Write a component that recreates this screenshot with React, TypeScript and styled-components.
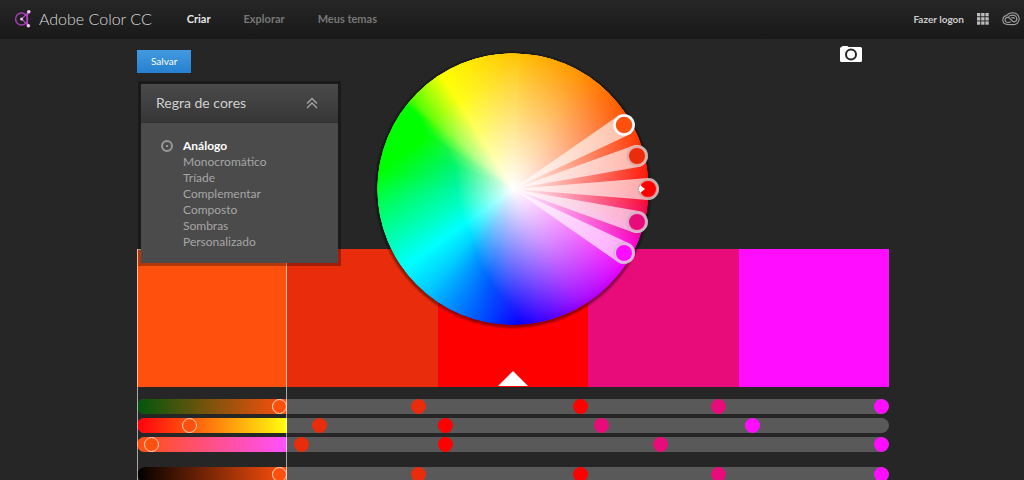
import React, { useState } from "react";
import styled, { createGlobalStyle } from "styled-components";

const GlobalStyle = createGlobalStyle`
  * { box-sizing: border-box; }
  body {
    margin: 0;
    background: #262626;
    font-family: Lato, "Open Sans", sans-serif;
    font-size: 12px;
    color: #a8a8a8;
  }
  button { font-family: inherit; border: 0; padding: 0; cursor: pointer; }
`;

const Page = styled.div`
  height: 100vh;
  overflow: hidden;
`;

const Header = styled.header`
  display: flex;
  align-items: center;
  height: 39px;
  padding: 0 4px 2px 14px;
  background: linear-gradient(#262626, #191919);
`;

const Brand = styled.a`
  display: flex;
  align-items: center;
  gap: 6px;
  color: #dcdcdc;
  font-size: 16px;
  font-weight: 300;
  line-height: 20px;
  text-decoration: none;
  white-space: nowrap;
`;

const Nav = styled.nav`
  display: flex;
  gap: 33px;
  margin-left: 35px;
`;

const NavLink = styled.a<{ $active?: boolean }>`
  color: ${(p) => (p.$active ? "#e6e6e6" : "#777777")};
  font-size: 11px;
  font-weight: 700;
  line-height: 16px;
  text-decoration: none;
`;

const Account = styled.div`
  display: flex;
  align-items: center;
  gap: 13px;
  margin-left: auto;
`;

const Login = styled.a`
  color: #cccccc;
  font-size: 10px;
  font-weight: 700;
  line-height: 14px;
  text-decoration: none;
`;

const IconButton = styled.button`
  display: flex;
  background: none;
`;

const Main = styled.main`
  padding: 0 135px 0 137px;
`;

const Stage = styled.section`
  position: relative;
  z-index: 1;
  display: grid;
  grid-template-columns: 1fr 300px 1fr;
  align-items: start;
`;

const LeftColumn = styled.div`
  padding-top: 11px;
`;

const RightColumn = styled.div`
  display: flex;
  justify-content: flex-end;
  padding: 7px 27px 0 0;
`;

const SaveButton = styled.button`
  display: block;
  height: 23px;
  padding: 0 14px;
  background: linear-gradient(#429ae0, #2580d0);
  color: #ffffff;
  font-size: 10px;
  line-height: 23px;
`;

const Panel = styled.section`
  width: 203px;
  margin: 8px 0 0 1px;
  border: 3px solid rgba(0, 0, 0, 0.3);
  background: #4b4b4b;
  background-clip: padding-box;
`;

const PanelHeader = styled.header`
  display: flex;
  align-items: center;
  justify-content: space-between;
  height: 39px;
  padding: 0 20px 0 15px;
  border-bottom: 1px solid #323232;
  background: linear-gradient(#4a4a4a, #363636);
`;

const PanelTitle = styled.h2`
  margin: 0;
  color: #cfcfcf;
  font-size: 14px;
  font-weight: 400;
  line-height: 20px;
`;

const RuleList = styled.fieldset`
  display: flex;
  flex-direction: column;
  margin: 0;
  padding: 15px 20px 13px;
  border: 0;
`;

const RuleItem = styled.label<{ $active: boolean }>`
  display: flex;
  align-items: center;
  gap: 10px;
  color: ${(p) => (p.$active ? "#ffffff" : "#a6a6a6")};
  font-size: 12px;
  font-weight: ${(p) => (p.$active ? 700 : 400)};
  line-height: 16px;
`;

const RuleRadio = styled.input`
  appearance: none;
  display: grid;
  place-items: center;
  width: 12px;
  height: 12px;
  margin: 0;
  border-radius: 50%;
  &:checked {
    border: 2px solid #989898;
  }
  &:checked::after {
    content: "";
    width: 2px;
    height: 2px;
    background: #989898;
  }
`;

const WheelSvg = styled.svg`
  display: block;
  overflow: visible;
`;

const Editor = styled.section`
  position: relative;
  margin-top: -90px;
`;

const Swatches = styled.div`
  display: grid;
  grid-template-columns: repeat(5, 1fr);
`;

const Swatch = styled.button<{ $color: string }>`
  display: flex;
  align-items: flex-end;
  justify-content: center;
  height: 138px;
  padding-bottom: 1px;
  background: ${(p) => p.$color};
`;

const Selection = styled.div`
  position: absolute;
  top: 0;
  bottom: 0;
  left: 0;
  width: 20%;
  border: 1px solid rgba(255, 255, 255, 0.6);
  pointer-events: none;
`;

const Sliders = styled.div`
  display: flex;
  flex-direction: column;
  gap: 15px;
  padding: 12px 0 40px;
`;

const SliderGroup = styled.div`
  display: flex;
  flex-direction: column;
  gap: 4px;
`;

const SliderRow = styled.div`
  display: grid;
  grid-template-columns: repeat(5, 1fr);
  height: 15px;
  border-radius: 8px;
  overflow: hidden;
  background: #595959;
`;

const Slider = styled.input<{ $color: string; $track?: string }>`
  appearance: none;
  width: 100%;
  height: 15px;
  margin: 0;
  background: ${(p) => p.$track || "transparent"};
  &::-webkit-slider-thumb {
    appearance: none;
    width: 15px;
    height: 15px;
    border: ${(p) => (p.$track ? "1px solid #ffd9c8" : "0")};
    border-radius: 50%;
    background: ${(p) => p.$color};
  }
`;

const COLORS = ["#ff500d", "#e82c0c", "#ff0000", "#e80c7a", "#ff0dff"];
const RULES = ["Análogo", "Monocromático", "Tríade", "Complementar", "Composto", "Sombras", "Personalizado"];

type Row = { name: string; track: string; values: number[] };
const GROUPS: Row[][] = [
  [
    { name: "R", track: "linear-gradient(90deg, #00560d, #ff500d)", values: [100, 91, 100, 91, 100] },
    { name: "G", track: "linear-gradient(90deg, #ff000d, #ff500d 33%, #ffff0d)", values: [33, 18, 0, 4, 5] },
    { name: "B", track: "linear-gradient(90deg, #ff500d, #ff50ff)", values: [5, 5, 0, 48, 100] },
  ],
  [{ name: "Brilho", track: "linear-gradient(90deg, #000000, #ff500d)", values: [100, 91, 100, 91, 100] }],
];

// Clockwise from the top: angle, rim colour, inner colour, radius share where the
// white fade ends, radius share where the rim colour is reached.
type Stop = [number, number[], number[], number, number];
const STOPS: Stop[] = [
  [0, [255, 196, 0], [255, 212, 60], 0.78, 1],
  [30, [255, 146, 0], [255, 160, 40], 0.84, 1],
  [60, [255, 72, 0], [255, 80, 10], 0.96, 1],
  [90, [255, 0, 0], [255, 20, 20], 0.97, 1],
  [105, [240, 0, 128], [240, 10, 128], 0.97, 1],
  [119, [255, 0, 255], [255, 20, 255], 0.94, 1],
  [150, [150, 0, 255], [160, 20, 255], 0.94, 1],
  [178, [0, 0, 255], [30, 20, 255], 0.9, 1],
  [194, [0, 80, 255], [0, 90, 255], 0.7, 1],
  [210, [0, 150, 255], [0, 165, 255], 0.54, 1],
  [220, [0, 200, 255], [0, 215, 255], 0.47, 1],
  [234, [0, 255, 255], [0, 255, 255], 0.43, 1],
  [252, [0, 255, 150], [0, 255, 200], 0.41, 1],
  [268, [0, 255, 60], [0, 248, 172], 0.41, 1],
  [277, [0, 255, 0], [0, 245, 150], 0.42, 0.98],
  [292, [0, 255, 0], [0, 245, 110], 0.46, 0.8],
  [302, [0, 255, 0], [30, 245, 70], 0.56, 0.74],
  [308, [0, 255, 0], [60, 255, 10], 0.74, 0.88],
  [311, [70, 255, 0], [110, 255, 10], 0.76, 1],
  [318, [150, 255, 0], [170, 255, 20], 0.76, 1],
  [328, [255, 255, 0], [255, 255, 20], 0.76, 1],
  [360, [255, 196, 0], [255, 212, 60], 0.78, 1],
];

const mix = (a: number, b: number, t: number) => a + (b - a) * t;
const mixRgb = (a: number[], b: number[], t: number) =>
  `rgb(${a.map((v, i) => Math.round(mix(v, b[i], t))).join(",")})`;

const STEP = 1;
const OVERLAP = 3;
const CENTER = 150;
const RADIUS = 136;

const WEDGES = Array.from({ length: 360 / STEP }, (_, i) => {
  const angle = i * STEP + STEP / 2;
  const k = STOPS.findIndex((s) => s[0] > angle) - 1;
  const a = STOPS[k];
  const b = STOPS[k + 1];
  const t = (angle - a[0]) / (b[0] - a[0]);
  const point = (deg: number) => {
    const r = (deg * Math.PI) / 180;
    return `${CENTER + 150 * Math.sin(r)},${CENTER - 150 * Math.cos(r)}`;
  };
  return {
    id: `wedge${i}`,
    rim: mixRgb(a[1], b[1], t),
    inner: mixRgb(a[2], b[2], t),
    fade: mix(a[3], b[3], t),
    full: mix(a[4], b[4], t),
    points: `${CENTER},${CENTER} ${point(i * STEP)} ${point((i + 1) * STEP + OVERLAP)}`,
  };
});

const HANDLES = [
  [261, 86],
  [274, 117],
  [285, 150],
  [274, 183],
  [261, 214],
];

function ColorWheel() {
  return (
    <WheelSvg width="300" height="300" viewBox="0 0 300 300" role="img" aria-label="Disco de cores">
      <defs>
        {WEDGES.map((w) => (
          <radialGradient key={w.id} id={w.id} gradientUnits="userSpaceOnUse" cx={CENTER} cy={CENTER} r={RADIUS}>
            <stop offset="0" stopColor="#ffffff" />
            <stop offset={w.fade} stopColor={w.inner} />
            <stop offset={w.full} stopColor={w.rim} />
          </radialGradient>
        ))}
        <clipPath id="disc">
          <circle cx={CENTER} cy={CENTER} r={RADIUS - 0.5} />
        </clipPath>
      </defs>
      <circle cx={CENTER} cy={CENTER + 1} r={RADIUS + 3} fill="#000000" fillOpacity="0.16" />
      <circle cx={CENTER} cy={CENTER + 1} r={RADIUS + 1.5} fill="#000000" fillOpacity="0.25" />
      <g clipPath="url(#disc)">
        <circle cx={CENTER} cy={CENTER} r="100" fill="#ffffff" />
        {WEDGES.map((w) => (
          <polygon key={w.id} points={w.points} fill={`url(#${w.id})`} />
        ))}
      </g>
      {HANDLES.map(([x, y], i) => {
        const dx = x - CENTER;
        const dy = y - CENTER;
        const len = Math.hypot(dx, dy);
        const nx = (-dy / len) * 11;
        const ny = (dx / len) * 11;
        return (
          <g key={i}>
            <path
              d={`M${CENTER},${CENTER} L${x + nx},${y + ny} A11,11 0 0 0 ${x - nx},${y - ny} Z`}
              fill="#ffffff"
              fillOpacity="0.64"
            />
            <circle
              cx={x}
              cy={y}
              r={i === 0 ? 9.5 : 9}
              fill={COLORS[i]}
              stroke={i === 0 ? "#ffffff" : ["", "#ff9c8c", "#f08a84", "#f0a0d0", "#f8b4f8"][i]}
              strokeWidth={i === 0 ? 2.5 : 2}
            />
            {i > 0 && <circle cx={x} cy={y} r="10" fill="none" stroke="#c0c0c0" strokeOpacity="0.55" strokeWidth="2" />}
          </g>
        );
      })}
      <path d="M276,148 h1 v-2 l5,4 l-5,4 v-2 h-1 z" fill="#ffffff" />
    </WheelSvg>
  );
}

function BrandIcon() {
  return (
    <svg width="19" height="20" viewBox="0 0 19 20" fill="none" aria-hidden="true">
      <circle cx="7.6" cy="10" r="6" stroke="#a63bb5" strokeWidth="1.5" />
      <path d="M14.6 3 C12.6 7 12.6 12.5 14.2 16.6 M14.6 3 L7.6 10 L14.2 16.6" stroke="#b24cc0" strokeWidth="1.1" />
      <circle cx="7.6" cy="10" r="1.6" fill="#e9b6ee" />
      <circle cx="14.8" cy="2.8" r="1.8" fill="#f0c4f4" />
      <circle cx="14.4" cy="16.8" r="1.8" fill="#f0c4f4" />
    </svg>
  );
}

function AppsIcon() {
  return (
    <svg width="12" height="12" viewBox="0 0 12 12" fill="#bdbdbd" aria-hidden="true">
      {[0, 1, 2].flatMap((r) =>
        [0, 1, 2].map((c) => <rect key={`${r}${c}`} x={c * 4.2} y={r * 4.2} width="3.3" height="3.3" />)
      )}
    </svg>
  );
}

function CloudIcon() {
  return (
    <svg width="18" height="14" viewBox="0 0 18 14" fill="none" stroke="#a0a0a0" aria-hidden="true">
      <path d="M5.4 12.4 C2.6 12.2 .8 10.4 .8 8 C.8 5.6 2.4 4 4.4 3.6 C6 1.6 8.6 .7 11 .8 C14.6 1 17.2 3.6 17.2 6.8 C17.2 10 14.8 12.6 11.6 12.6 Z" strokeWidth="1.1" />
      <path d="M8.6 9.8 C7.4 10.6 5 10.6 3.9 9.6 C2.7 8.4 2.9 6.6 4.2 5.8 C5.4 5.1 6.8 5.4 7.8 6.4 L10.6 9.2 C12 10.4 14.8 9.6 14.9 7 C15 4.6 12.6 3.1 10.8 3.1 C9 3.1 7.6 3.6 6.6 4.6 M9.4 6.2 C10.4 5.2 12 5.4 12.7 6.6" strokeWidth="1.2" />
    </svg>
  );
}

function CameraIcon() {
  return (
    <svg width="22" height="17" viewBox="0 0 22 17" aria-hidden="true">
      <path d="M1.5 1 Q2 0 3 0 H7 Q8 0 8.5 1 H20.5 Q22 1 22 2.5 V14.5 Q22 16 20.5 16 H1.5 Q0 16 0 14.5 V2.5 Q0 1 1.5 1 Z" fill="#ffffff" />
      <circle cx="11" cy="8.5" r="5" fill="#ffffff" stroke="#262626" strokeWidth="2" />
    </svg>
  );
}

export default function App() {
  const [rule, setRule] = useState(RULES[0]);
  return (
    <Page>
      <GlobalStyle />
      <Header>
        <Brand href="#">
          <BrandIcon />
          Adobe Color CC
        </Brand>
        <Nav>
          <NavLink href="#criar" $active>Criar</NavLink>
          <NavLink href="#explorar">Explorar</NavLink>
          <NavLink href="#temas">Meus temas</NavLink>
        </Nav>
        <Account>
          <Login href="#logon">Fazer logon</Login>
          <IconButton aria-label="Aplicativos"><AppsIcon /></IconButton>
          <IconButton aria-label="Creative Cloud"><CloudIcon /></IconButton>
        </Account>
      </Header>
      <Main>
        <Stage>
          <LeftColumn>
            <SaveButton>Salvar</SaveButton>
            <Panel>
              <PanelHeader>
                <PanelTitle>Regra de cores</PanelTitle>
                <IconButton aria-label="Recolher">
                  <svg width="12" height="12" viewBox="0 0 12 12" fill="none" stroke="#a4a4a4" strokeWidth="1.4" aria-hidden="true">
                    <path d="M1 6.5 L6 1.5 L11 6.5 M1 11 L6 6 L11 11" />
                  </svg>
                </IconButton>
              </PanelHeader>
              <RuleList aria-label="Regra de cores">
                {RULES.map((name) => (
                  <RuleItem key={name} $active={rule === name}>
                    <RuleRadio type="radio" name="rule" checked={rule === name} onChange={() => setRule(name)} />
                    {name}
                  </RuleItem>
                ))}
              </RuleList>
            </Panel>
          </LeftColumn>
          <ColorWheel />
          <RightColumn>
            <IconButton aria-label="Criar a partir de imagem"><CameraIcon /></IconButton>
          </RightColumn>
        </Stage>
        <Editor>
          <Swatches>
            {COLORS.map((color, i) => (
              <Swatch key={color} $color={color} aria-label={`Cor ${color}`}>
                {i === 2 && (
                  <svg width="30" height="15" viewBox="0 0 30 15" aria-hidden="true">
                    <path d="M15 0 L30 15 H0 Z" fill="#ffffff" />
                  </svg>
                )}
              </Swatch>
            ))}
          </Swatches>
          <Sliders>
            {GROUPS.map((rows, g) => (
              <SliderGroup key={g}>
                {rows.map((row) => (
                  <SliderRow key={row.name}>
                    {row.values.map((value, i) => (
                      <Slider
                        key={i}
                        type="range"
                        aria-label={`${row.name}, cor ${i + 1}`}
                        defaultValue={value}
                        $color={COLORS[i]}
                        $track={i === 0 ? row.track : undefined}
                      />
                    ))}
                  </SliderRow>
                ))}
              </SliderGroup>
            ))}
          </Sliders>
          <Selection />
        </Editor>
      </Main>
    </Page>
  );
}
